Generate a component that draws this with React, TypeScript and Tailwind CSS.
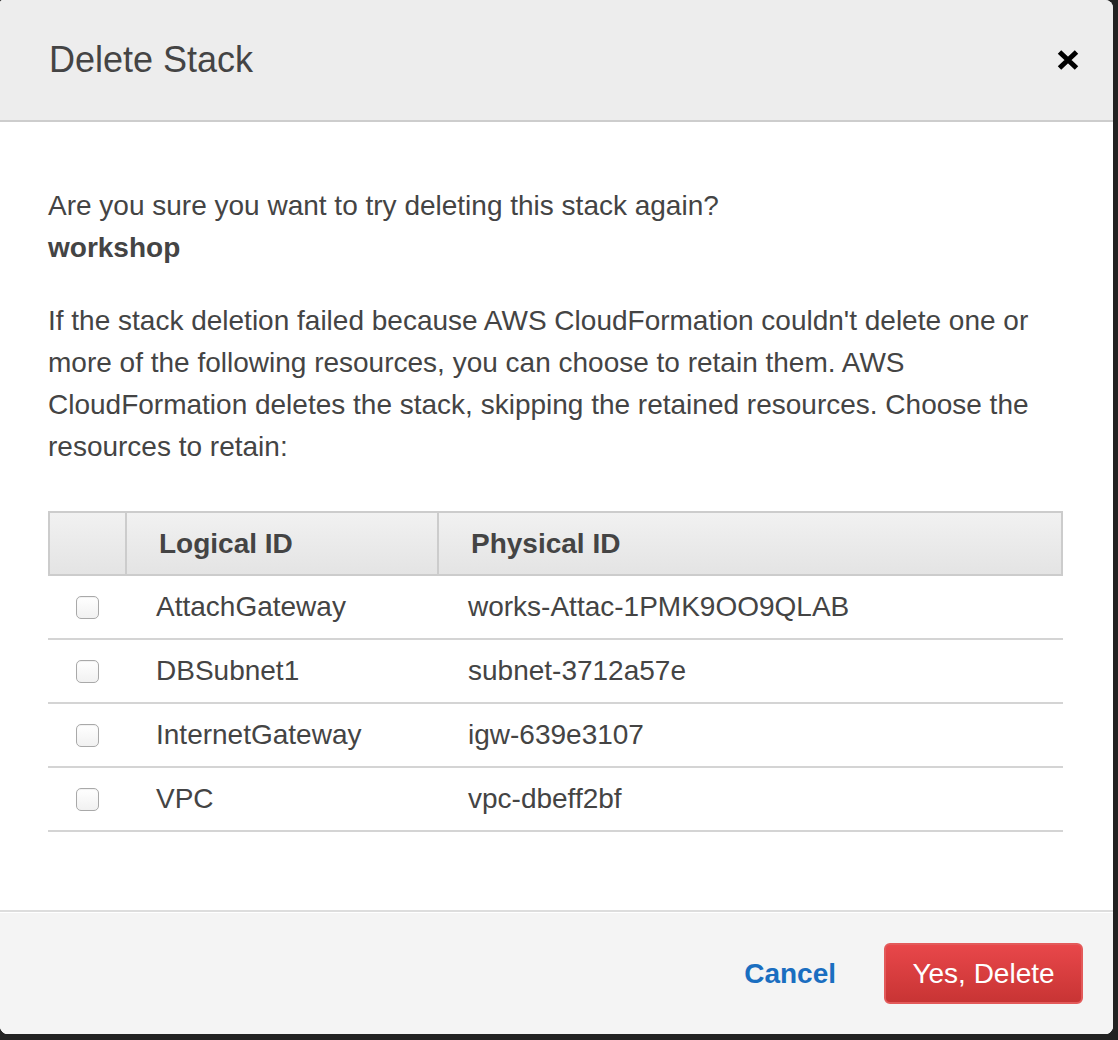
import React from "react";

const rows = [
  { logical: "AttachGateway", physical: "works-Attac-1PMK9OO9QLAB" },
  { logical: "DBSubnet1", physical: "subnet-3712a57e" },
  { logical: "InternetGateway", physical: "igw-639e3107" },
  { logical: "VPC", physical: "vpc-dbeff2bf" },
];

function Checkbox() {
  return (
    <span className="block w-[23px] h-[23px] rounded-[5px] border border-[#a9a9a9] bg-gradient-to-b from-[#ffffff] to-[#f1f1f1] shadow-[inset_0_1px_1px_rgba(0,0,0,0.06)]" />
  );
}

export default function App() {
  return (
    <div
      className="w-[1118px] h-[1040px] bg-[#222222] overflow-hidden"
      style={{ fontFamily: '"Liberation Sans", Arial, Helvetica, sans-serif' }}
    >
      <div className="w-[1113px] h-[1034px] bg-white rounded-[8px] rounded-tl-[3px] overflow-hidden flex flex-col">
        {/* Header */}
        <div className="h-[122px] shrink-0 bg-[#ededed] border-b-2 border-[#cdcdcd] flex items-center justify-between pl-[49px] pr-[34px]">
          <h1 className="text-[36px] leading-[40px] text-[#444444] font-normal">Delete Stack</h1>
          <button className="w-[22px] h-[22px] flex items-center justify-center">
            <svg width="22" height="22" viewBox="0 0 22 22">
              <path d="M2.5 3 L19.5 19 M19.5 3 L2.5 19" stroke="#000" strokeWidth="5" strokeLinecap="butt" />
            </svg>
          </button>
        </div>

        {/* Body */}
        <div className="flex-1 pt-[63px] pl-[48px] pr-[50px] text-[28px] leading-[42px] text-[#444444]">
          <p>Are you sure you want to try deleting this stack again?</p>
          <p className="font-bold">workshop</p>
          <p className="mt-[31px]">
            If the stack deletion failed because AWS CloudFormation couldn't delete one or more of the following
            resources, you can choose to retain them. AWS CloudFormation deletes the stack, skipping the retained
            resources. Choose the resources to retain:
          </p>

          <div className="mt-[43px] w-[1015px]">
            <div className="h-[65px] flex border-2 border-[#cccccc] bg-gradient-to-b from-[#f1f1f1] to-[#e4e4e4]">
              <div className="w-[77px] border-r-2 border-[#cccccc]" />
              <div className="w-[312px] border-r-2 border-[#cccccc] pl-[32px] flex items-center font-bold">
                Logical ID
              </div>
              <div className="flex-1 pl-[32px] flex items-center font-bold">Physical ID</div>
            </div>
            {rows.map((r) => (
              <div key={r.logical} className="h-[64px] flex items-center border-b-2 border-[#d4d4d4]">
                <div className="w-[79px] pl-[28px] flex items-center">
                  <Checkbox />
                </div>
                <div className="w-[312px] pl-[29px]">{r.logical}</div>
                <div className="flex-1 pl-[29px]">{r.physical}</div>
              </div>
            ))}
          </div>
        </div>

        {/* Footer */}
        <div className="h-[124px] shrink-0 border-t-2 border-[#dddddd] bg-white pt-[1px]">
          <div className="h-full bg-[#f4f4f4] flex items-center justify-end pr-[30px] gap-[48px]">
            <button className="text-[28px] font-bold text-[#1a6ec0] leading-[40px]">Cancel</button>
            <button className="w-[199px] h-[61px] rounded-[6px] border-2 border-[#e35a5a] bg-gradient-to-b from-[#e8474a] to-[#c83434] text-white text-[28px] leading-[40px] flex items-center justify-center">
              Yes, Delete
            </button>
          </div>
        </div>
      </div>
    </div>
  );
}
